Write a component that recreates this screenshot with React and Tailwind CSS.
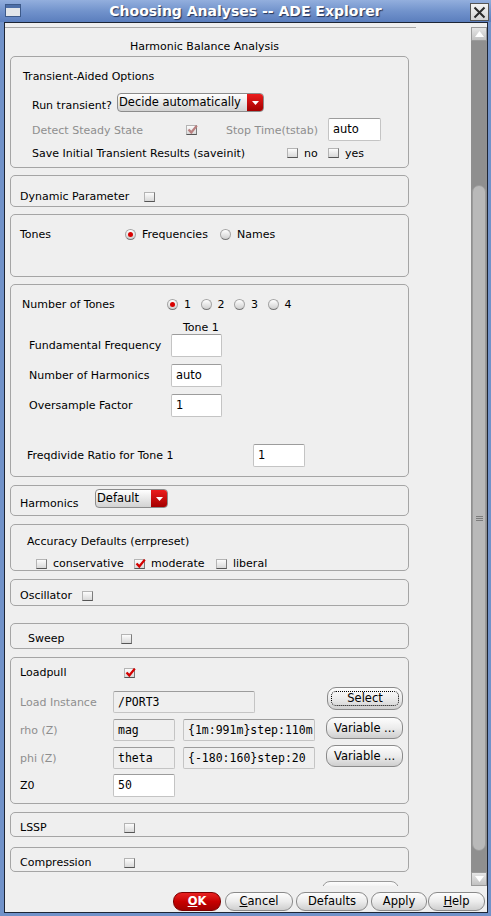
import React from 'react';

const gray = 'text-[#8e8e8e]';

function Check({ checked, disabled }) {
  return (
    <span className="relative inline-block w-[11px] h-[10px] shrink-0 border border-[#b4b4b4] border-r-[#7c7c7c] border-b-[#555] bg-gradient-to-b from-[#fcfcfc] to-[#d9d9d9]">
      {checked && (
        <svg className="absolute left-[0px] top-[-2px]" width="11" height="11" viewBox="0 0 11 11">
          <path d="M1.5 5.5 L4.3 8.4 L9.8 1.6" fill="none" stroke={disabled ? '#b98080' : '#d40000'} strokeWidth="2.3" />
        </svg>
      )}
    </span>
  );
}

function Radio({ checked }) {
  return (
    <span className="inline-flex items-center justify-center w-[11px] h-[11px] shrink-0 rounded-full border border-[#a4a4a4] border-b-[#777] bg-gradient-to-b from-white to-[#cfcfcf]">
      {checked && <span className="w-[5px] h-[5px] rounded-full bg-[#d80000]" />}
    </span>
  );
}

function Field({ className, value, mono, off }) {
  return (
    <div
      className={`flex items-center pl-[4px] rounded-[2px] border border-[#c4c4c4] border-t-[#9c9c9c] ${
        off ? 'bg-[#efefef]' : 'bg-white'
      } ${mono ? "font-['DejaVu_Sans_Mono',monospace] text-[11.5px]" : 'text-[11.5px]'} ${className}`}
    >
      {value}
    </div>
  );
}

function Dropdown({ className, label }) {
  return (
    <div className={`flex rounded-[4px] border border-[#8c8c8c] overflow-hidden bg-gradient-to-b from-white to-[#d2d2d2] ${className}`}>
      <span className="flex-1 pl-[1px] leading-[16px] text-[11.5px]">{label}</span>
      <span className="w-[16px] bg-gradient-to-b from-[#ec1c1c] to-[#a40000] flex items-center justify-center">
        <svg width="7" height="4" viewBox="0 0 7 4">
          <path d="M0 0h7L3.5 4z" fill="white" />
        </svg>
      </span>
    </div>
  );
}

function Btn({ className, children, focus }) {
  return (
    <div className={`flex items-center justify-center rounded-[9px] border border-[#8a8a8a] bg-gradient-to-b from-[#fdfdfd] via-[#ececec] to-[#cfcfcf] text-[11.5px] ${className}`}>
      {focus ? (
        <span className="flex items-center justify-center w-[calc(100%-6px)] h-[calc(100%-6px)] border border-dotted border-black rounded-[5px]">
          {children}
        </span>
      ) : (
        children
      )}
    </div>
  );
}

function Group({ className, children }) {
  return <div className={`ml-[5px] w-[399px] shrink-0 border border-[#a5a5a5] rounded-[5px] ${className}`}>{children}</div>;
}

function TitleBar() {
  return (
    <div className="h-[22px] shrink-0 flex items-center bg-gradient-to-b from-[#93afdd] via-[#7293cc] to-[#5b7ebd]">
      <svg className="ml-[5px] mt-[-2px]" width="16" height="13" viewBox="0 0 16 13">
        <rect x="0.5" y="0.5" width="15" height="12" fill="#e2e6ea" stroke="#3d5a8a" />
        <rect x="1" y="1" width="14" height="3" fill="#4d6fa8" />
      </svg>
      <div className="flex-1 text-center text-white font-bold text-[14px] leading-[22px] [text-shadow:1px_1px_1px_rgba(20,30,60,0.8)]">
        Choosing Analyses -- ADE Explorer
      </div>
      <div className="mr-[2px] mt-[2px] w-[19px] h-[18px] flex items-center justify-center bg-gradient-to-b from-[#f4f4f4] to-[#d4d4d4] border border-[#555]">
        <svg width="13" height="13" viewBox="0 0 13 13">
          <path d="M1.5 1.5L11.5 11.5M11.5 1.5L1.5 11.5" stroke="#2a2a2a" strokeWidth="2" />
        </svg>
      </div>
    </div>
  );
}

function ScrollBar() {
  return (
    <div className="w-[16px] h-full pt-[4px] flex flex-col">
      <div className="h-[14px] flex items-center justify-center bg-gradient-to-b from-[#e6e6e6] to-[#c2c2c2] border border-[#9a9a9a]">
        <svg width="9" height="6" viewBox="0 0 9 6">
          <path d="M0 6h9L4.5 0z" fill="white" />
        </svg>
      </div>
      <div className="flex-1 bg-[#8f8f8f] flex flex-col">
        <div className="mt-[144px] h-[666px] mx-[1px] rounded-[7px] bg-[#b9b9b9] border border-[#9b9b9b] flex flex-col items-center justify-center gap-[1px]">
          <span className="w-[7px] h-px bg-[#7c7c7c]" />
          <span className="w-[7px] h-px bg-[#7c7c7c]" />
          <span className="w-[7px] h-px bg-[#7c7c7c]" />
        </div>
      </div>
      <div className="h-[14px] flex items-center justify-center bg-gradient-to-b from-[#e6e6e6] to-[#c2c2c2] border border-[#9a9a9a]">
        <svg width="9" height="6" viewBox="0 0 9 6">
          <path d="M0 0h9L4.5 6z" fill="white" />
        </svg>
      </div>
    </div>
  );
}

function Content() {
  return (
    <div className="w-[466px] h-full overflow-hidden pt-[4px] flex flex-col leading-[13px]">
      <div className="h-px w-[411px] shrink-0 bg-[#a9a9a9]" />
      <div className="h-[28px] shrink-0 pt-[12px] pl-[125px]">Harmonic Balance Analysis</div>

      {/* transient aided */}
      <Group className="h-[112px] pt-[13px]">
        <div className="h-[13px] pl-[12px]">Transient-Aided Options</div>
        <div className="mt-[10px] h-[19px] flex pl-[21px]">
          <span className="w-[85px] self-end">Run transient?</span>
          <Dropdown className="w-[147px] h-[19px]" label="Decide automatically" />
        </div>
        <div className="mt-[6px] h-[23px] flex items-center pl-[21px]">
          <span className={`w-[154px] pt-[2px] ${gray}`}>Detect Steady State</span>
          <Check checked disabled />
          <span className={`ml-[29px] w-[102px] pt-[2px] ${gray}`}>Stop Time(tstab)</span>
          <Field className="w-[53px] h-[23px]" value="auto" />
        </div>
        <div className="mt-[5px] h-[14px] flex items-center pl-[21px]">
          <span className="w-[255px]">Save Initial Transient Results (saveinit)</span>
          <Check />
          <span className="ml-[6px] w-[24px]">no</span>
          <Check />
          <span className="ml-[6px]">yes</span>
        </div>
      </Group>

      <Group className="mt-[7px] h-[32px] pt-[14px]">
        <div className="h-[13px] flex items-center pl-[9px]">
          <span className="w-[124px]">Dynamic Parameter</span>
          <Check />
        </div>
      </Group>

      <Group className="mt-[7px] h-[63px] pt-[13px]">
        <div className="h-[13px] flex items-center pl-[9px]">
          <span className="w-[105px]">Tones</span>
          <Radio checked />
          <span className="ml-[6px] w-[78px]">Frequencies</span>
          <Radio />
          <span className="ml-[6px]">Names</span>
        </div>
      </Group>

      <Group className="mt-[7px] h-[193px] pt-[13px]">
        <div className="h-[13px] flex items-center pl-[11px]">
          <span className="w-[145px]">Number of Tones</span>
          {['1', '2', '3', '4'].map((n, i) => (
            <span key={n} className="w-[33.5px] flex items-center">
              <Radio checked={i === 0} />
              <span className="ml-[6px]">{n}</span>
            </span>
          ))}
        </div>
        <div className="mt-[11px] h-[12px] leading-[12px] pl-[172px]">Tone 1</div>
        <div className="h-[23px] flex items-center pl-[18px]">
          <span className="w-[142px]">Fundamental Frequency</span>
          <Field className="w-[51px] h-[23px]" value="" />
        </div>
        <div className="mt-[7px] h-[23px] flex items-center pl-[18px]">
          <span className="w-[142px]">Number of Harmonics</span>
          <Field className="w-[51px] h-[23px]" value="auto" />
        </div>
        <div className="mt-[7px] h-[23px] flex items-center pl-[18px]">
          <span className="w-[142px]">Oversample Factor</span>
          <Field className="w-[51px] h-[23px]" value="1" />
        </div>
        <div className="mt-[27px] h-[23px] flex items-center pl-[16px]">
          <span className="w-[226px]">Freqdivide Ratio for Tone 1</span>
          <Field className="w-[52px] h-[23px]" value="1" />
        </div>
      </Group>

      <Group className="mt-[8px] h-[31px] pt-[3px]">
        <div className="h-[21px] flex pl-[9px]">
          <span className="w-[75px] self-end">Harmonics</span>
          <Dropdown className="w-[73px] h-[19px]" label="Default" />
        </div>
      </Group>

      <Group className="mt-[8px] h-[47px] pt-[10px]">
        <div className="h-[13px] pl-[16px]">Accuracy Defaults (errpreset)</div>
        <div className="mt-[9px] h-[13px] flex items-center pl-[25px]">
          <span className="w-[98px] flex items-center">
            <Check />
            <span className="ml-[6px]">conservative</span>
          </span>
          <span className="w-[82px] flex items-center">
            <Check checked />
            <span className="ml-[6px]">moderate</span>
          </span>
          <span className="flex items-center">
            <Check />
            <span className="ml-[6px]">liberal</span>
          </span>
        </div>
      </Group>

      <Group className="mt-[8px] h-[27px] pt-[9px]">
        <div className="h-[13px] flex items-center pl-[9px]">
          <span className="w-[62px]">Oscillator</span>
          <Check />
        </div>
      </Group>

      <Group className="mt-[17px] h-[26px] pt-[8px]">
        <div className="h-[13px] flex items-center pl-[17px]">
          <span className="w-[93px]">Sweep</span>
          <Check />
        </div>
      </Group>

      <Group className="mt-[8px] h-[147px] pt-[8px]">
        <div className="h-[13px] flex items-center pl-[9px]">
          <span className="w-[104px]">Loadpull</span>
          <Check checked />
        </div>
        <div className="mt-[8px] h-[25px] flex items-start pl-[9px]">
          <span className={`w-[93px] pt-[9px] ${gray}`}>Load Instance</span>
          <Field off mono className="mt-[4px] w-[142px] h-[22px]" value="/PORT3" />
          <Btn focus className="ml-[72px] w-[76px] h-[23px]">Select</Btn>
        </div>
        <div className="mt-[5px] h-[24px] flex items-start pl-[9px]">
          <span className={`w-[93px] pt-[7px] ${gray}`}>rho (Z)</span>
          <Field off mono className="mt-[2px] w-[62px] h-[22px]" value="mag" />
          <Field off mono className="mt-[2px] ml-[8px] w-[132px] h-[22px]" value="{1m:991m}step:110m" />
          <Btn className="ml-[11px] w-[77px] h-[22px]">Variable ...</Btn>
        </div>
        <div className="mt-[4px] h-[24px] flex items-start pl-[9px]">
          <span className={`w-[93px] pt-[7px] ${gray}`}>phi (Z)</span>
          <Field off mono className="mt-[2px] w-[62px] h-[22px]" value="theta" />
          <Field off mono className="mt-[2px] ml-[8px] w-[132px] h-[22px]" value="{-180:160}step:20" />
          <Btn className="ml-[11px] w-[77px] h-[22px]">Variable ...</Btn>
        </div>
        <div className="mt-[5px] h-[23px] flex items-center pl-[9px]">
          <span className="w-[93px]">Z0</span>
          <Field mono className="w-[62px] h-[23px]" value="50" />
        </div>
      </Group>

      <Group className="mt-[8px] h-[25px] pt-[8px]">
        <div className="h-[13px] flex items-center pl-[9px]">
          <span className="w-[104px]">LSSP</span>
          <Check />
        </div>
      </Group>

      <Group className="mt-[10px] h-[25px] pt-[8px]">
        <div className="h-[13px] flex items-center pl-[9px]">
          <span className="w-[104px]">Compression</span>
          <Check />
        </div>
      </Group>

      <div className="mt-[9px] ml-[317px] w-[77px] h-[20px] shrink-0 rounded-[8px] border border-[#9a9a9a] bg-gradient-to-b from-[#fdfdfd] to-[#d0d0d0]" />
    </div>
  );
}

export default function App() {
  return (
    <div className="w-[491px] h-[916px] bg-[#7192c9] flex flex-col font-['DejaVu_Sans',sans-serif] text-[11px] text-black select-none">
      <TitleBar />
      <div className="flex-1 ml-[4px] mr-[3px] mb-[3px] border border-[#1d2535] bg-[#efefef] flex flex-col">
        <div className="h-[863px] shrink-0 flex">
          <Content />
          <ScrollBar />
        </div>
        <div className="h-[26px] flex items-start pt-[6px] pl-[168px] text-[11.5px]">
          <div className="w-[48px] h-[19px] flex items-center justify-center rounded-[9px] border border-[#7a0000] bg-gradient-to-b from-[#e82020] via-[#c80000] to-[#a00000] text-white font-bold">
            <span className="underline">O</span>K
          </div>
          <Btn className="ml-[4px] w-[68px] h-[19px]">
            <span>
              <span className="underline">C</span>ancel
            </span>
          </Btn>
          <Btn className="ml-[3px] w-[72px] h-[19px]">Defaults</Btn>
          <Btn className="ml-[3px] w-[56px] h-[19px]">Apply</Btn>
          <Btn className="ml-[1px] w-[57px] h-[19px]">
            <span>
              <span className="underline">H</span>elp
            </span>
          </Btn>
        </div>
      </div>
    </div>
  );
}
